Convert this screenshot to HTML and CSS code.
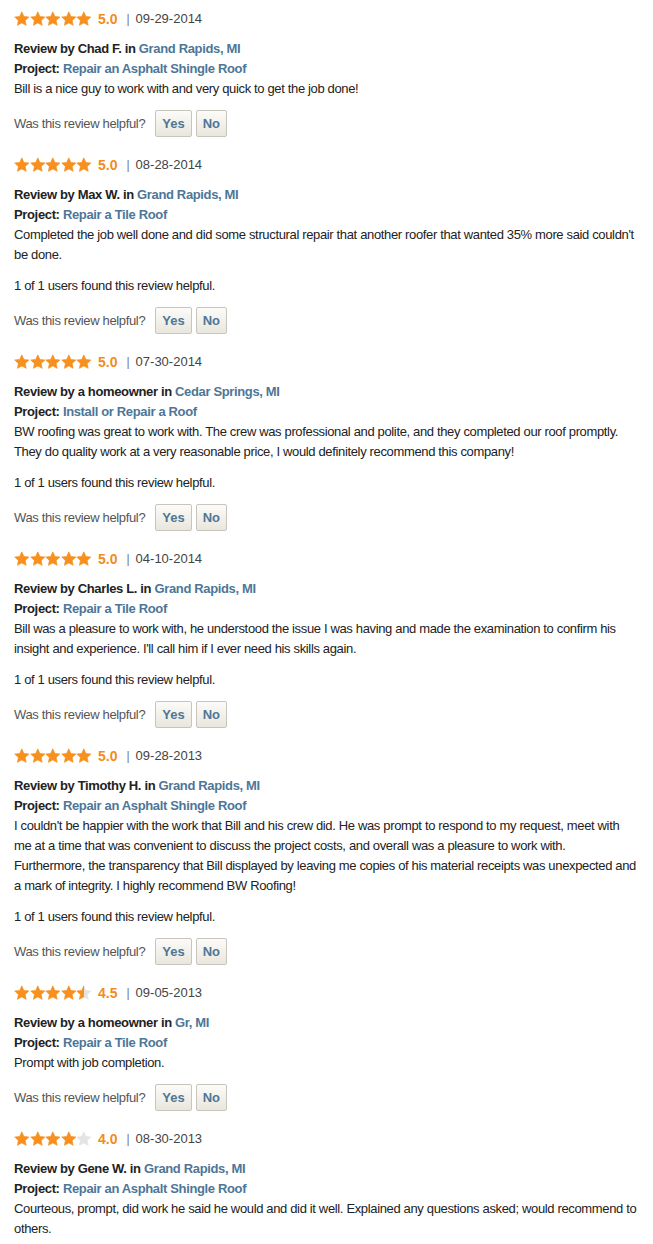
FILE: index.html
```html
<!DOCTYPE html>
<html lang="en">

<head>
  <meta charset="UTF-8">
  <meta name="viewport" content="width=device-width, initial-scale=1.0">
  <title>Reviews</title>
  <link rel="stylesheet" href="styles.css">
</head>

<body>
  <svg class="defs" width="0" height="0">
    <defs>
      <symbol id="star" viewBox="0 0 24 24">
        <path d="M12 1L15.23 8.05 22.94 8.95 17.23 14.2 18.76 21.8 12 18 5.24 21.8 6.77 14.2 1.06 8.95 8.77 8.05Z" />
      </symbol>
      <linearGradient id="half">
        <stop offset="50%" stop-color="#f7901e" />
        <stop offset="50%" stop-color="#e4e4e2" />
      </linearGradient>
    </defs>
  </svg>

  <div class="reviews" id="reviews"></div>

  <script>
    const reviews = [
      {
        rating: 5, date: '09-29-2014', by: 'Chad F.', city: 'Grand Rapids, MI',
        project: 'Repair an Asphalt Shingle Roof',
        text: 'Bill is a nice guy to work with and very quick to get the job done!',
        helpful: false
      },
      {
        rating: 5, date: '08-28-2014', by: 'Max W.', city: 'Grand Rapids, MI',
        project: 'Repair a Tile Roof',
        text: "Completed the job well done and did some structural repair that another roofer that wanted 35% more said couldn't be done.",
        helpful: true
      },
      {
        rating: 5, date: '07-30-2014', by: 'a homeowner', city: 'Cedar Springs, MI',
        project: 'Install or Repair a Roof',
        text: 'BW roofing was great to work with. The crew was professional and polite, and they completed our roof promptly. They do quality work at a very reasonable price, I would definitely recommend this company!',
        helpful: true
      },
      {
        rating: 5, date: '04-10-2014', by: 'Charles L.', city: 'Grand Rapids, MI',
        project: 'Repair a Tile Roof',
        text: "Bill was a pleasure to work with, he understood the issue I was having and made the examination to confirm his insight and experience. I'll call him if I ever need his skills again.",
        helpful: true
      },
      {
        rating: 5, date: '09-28-2013', by: 'Timothy H.', city: 'Grand Rapids, MI',
        project: 'Repair an Asphalt Shingle Roof',
        text: "I couldn't be happier with the work that Bill and his crew did. He was prompt to respond to my request, meet with me at a time that was convenient to discuss the project costs, and overall was a pleasure to work with. Furthermore, the transparency that Bill displayed by leaving me copies of his material receipts was unexpected and a mark of integrity. I highly recommend BW Roofing!",
        helpful: true
      },
      {
        rating: 4.5, date: '09-05-2013', by: 'a homeowner', city: 'Gr, MI',
        project: 'Repair a Tile Roof',
        text: 'Prompt with job completion.',
        helpful: false
      },
      {
        rating: 4, date: '08-30-2013', by: 'Gene W.', city: 'Grand Rapids, MI',
        project: 'Repair an Asphalt Shingle Roof',
        text: 'Courteous, prompt, did work he said he would and did it well. Explained any questions asked; would recommend to others.',
        helpful: false
      }
    ];

    function starsHtml(rating) {
      let html = '';
      for (let i = 1; i <= 5; i++) {
        let cls = 'empty';
        if (rating >= i) {
          cls = 'full';
        } else if (rating >= i - 0.5) {
          cls = 'half';
        }
        html += '<svg class="star ' + cls + '"><use href="#star"/></svg>';
      }
      return html;
    }

    const list = document.getElementById('reviews');
    reviews.forEach(function(r) {
      const item = document.createElement('div');
      item.className = 'review';
      item.innerHTML =
        '<div class="rating">' +
          '<span class="stars">' + starsHtml(r.rating) + '</span>' +
          '<span class="score">' + r.rating.toFixed(1) + '</span>' +
          '<span class="sep">|</span>' +
          '<span class="date">' + r.date + '</span>' +
        '</div>' +
        '<div class="meta"><b>Review by ' + r.by + ' in</b> <a href="#">' + r.city + '</a></div>' +
        '<div class="meta"><b>Project:</b> <a href="#">' + r.project + '</a></div>' +
        '<p class="text">' + r.text + '</p>' +
        (r.helpful ? '<p class="count">1 of 1 users found this review helpful.</p>' : '') +
        '<div class="vote">' +
          '<span>Was this review helpful?</span>' +
          '<button class="btn">Yes</button>' +
          '<button class="btn">No</button>' +
        '</div>';
      list.appendChild(item);
    });
  </script>
</body>

</html>
```

FILE: styles.css
```css
body {
  margin: 0;
  background-color: #fff;
  color: #222;
  font-family: "Liberation Sans", Arial, Helvetica, sans-serif;
  font-size: 13px;
  line-height: 20px;
  letter-spacing: -0.35px;
}

.defs {
  position: absolute;
  width: 0;
  height: 0;
}

.reviews {
  padding: 9px 14px 0 14px;
}

.review {
  margin-bottom: 18px;
}

.rating {
  display: flex;
  align-items: center;
  height: 20px;
  letter-spacing: 0;
}

.stars {
  display: flex;
  width: 78px;
  justify-content: space-between;
}

.star {
  width: 16px;
  height: 16px;
  fill: #f7901e;
  stroke: #f7901e;
  stroke-width: 1;
  stroke-linejoin: round;
}

.star.empty {
  fill: #e4e4e2;
  stroke: #e4e4e2;
}

.star.half {
  fill: url(#half);
  stroke: url(#half);
}

.score {
  margin-left: 6px;
  color: #f28c1c;
  font-weight: bold;
  font-size: 14px;
}

.sep {
  margin-left: 9px;
  color: #777;
  font-size: 12px;
}

.date {
  margin-left: 6px;
  color: #444;
}

.rating + .meta {
  margin-top: 10px;
}

.meta a {
  color: #4e7697;
  font-weight: bold;
  text-decoration: none;
}

.text {
  margin: 0;
}

.count {
  margin: 11px 0 0 0;
}

.vote {
  display: flex;
  align-items: center;
  margin-top: 11px;
  color: #555;
}

.vote span {
  margin-right: 10px;
}

.btn {
  height: 27px;
  margin-right: 4px;
  padding: 0 6px;
  border: 1px solid #c8c5bc;
  border-radius: 2px;
  background: linear-gradient(#fcfbf8, #e9e6dd);
  color: #4e7697;
  font-family: inherit;
  font-size: 13px;
  font-weight: bold;
  letter-spacing: 0;
  cursor: pointer;
}
```
